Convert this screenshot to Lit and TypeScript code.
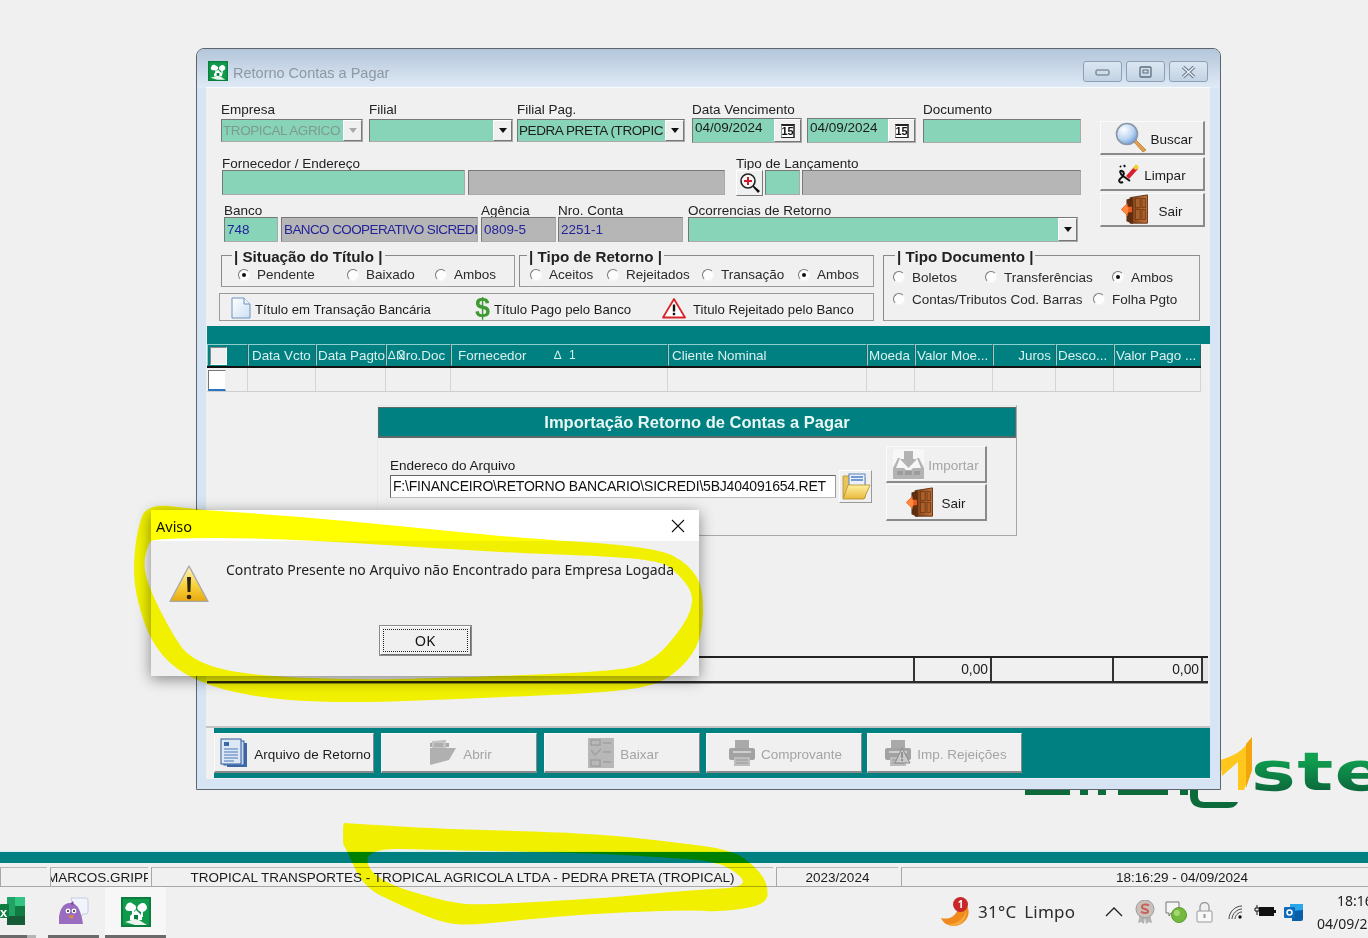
import { LitElement, html, css, svg } from "lit";
import { customElement } from "lit/decorators.js";

const appIcon = (s: number) => html`<svg width=${s} height=${s} viewBox="0 0 30 30">
  <rect width="30" height="30" fill="#0b7d3e"/>
  <rect x="2" y="2" width="26" height="26" fill="#0f9a4c"/>
  <path d="M5 9a4 4 0 0 1 7-2 4 4 0 0 1 3 5l-2 2v5h-2v-5L7 14a3 3 0 0 1-2-5zM19 7a4 4 0 0 1 6 1 4 4 0 0 1-1 6l-2 1v5h-2v-5l-3-2a4 4 0 0 1 2-6z" fill="#fff"/>
  <path d="M9 19l6-6 6 6v4H9z" fill="#fff"/><rect x="13" y="18" width="4" height="5" fill="#0b7d3e"/>
  <path d="M4 25l10-3 4 1 8 5H14z" fill="#e8f5ec"/>
</svg>`;

const door = (s: number) => html`<svg width=${s * 1.0} height=${s} viewBox="0 0 34 34">
  <defs><linearGradient id="dr" x1="0" x2="1"><stop offset="0" stop-color="#7a3c14"/><stop offset="1" stop-color="#c7763a"/></linearGradient></defs>
  <path d="M10 4L29 1v31H10z" fill="url(#dr)" stroke="#5a2c10" stroke-width="1"/>
  <path d="M6 6l7-2v29l-7-3z" fill="#5e2e10"/>
  <rect x="16" y="5" width="5" height="10" fill="#a85f2b" stroke="#6e3614" stroke-width=".8"/>
  <rect x="23" y="5" width="4" height="10" fill="#a85f2b" stroke="#6e3614" stroke-width=".8"/>
  <rect x="16" y="17" width="5" height="11" fill="#a85f2b" stroke="#6e3614" stroke-width=".8"/>
  <rect x="23" y="17" width="4" height="11" fill="#a85f2b" stroke="#6e3614" stroke-width=".8"/>
  <path d="M0 17l7-7v4h5v6H7v4z" fill="#f2591f"/><path d="M1 17l6-6v3h1v7H7v3z" fill="#ff8a3c"/>
</svg>`;

const magnifier = html`<svg width="32" height="32" viewBox="0 0 32 32">
  <defs><radialGradient id="mg" cx=".35" cy=".3" r=".8"><stop offset="0" stop-color="#fdfeff"/><stop offset=".55" stop-color="#bcd6f2"/><stop offset="1" stop-color="#5d92d6"/></radialGradient></defs>
  <path d="M19 20l9 10 3-2-10-10z" fill="#e0a050" stroke="#b97a2c" stroke-width=".8"/>
  <circle cx="12" cy="12" r="10.5" fill="url(#mg)" stroke="#8b98a8" stroke-width="1.6"/>
</svg>`;

const lens = html`<svg width="22" height="22" viewBox="0 0 22 22">
  <path d="M13 14l6 7 2-2-7-6z" fill="#111"/>
  <circle cx="9" cy="9" r="7" fill="#f4f7f4" stroke="#222" stroke-width="1.6"/>
  <path d="M9 5v8M5 9h8" stroke="#d3182f" stroke-width="2"/>
</svg>`;

const marker = html`<svg width="22" height="22" viewBox="0 0 22 22">
  <path d="M5 19c-4 2-5-2-2-4s4-6 1-7-2 3 1 5l7 5M2 3l1 1M6 2l1 2" stroke="#111" stroke-width="2" fill="none"/>
  <path d="M8 13L17 3l3 3-9 10z" fill="#d8232f"/><path d="M15 5l3-4 3 3-3 3z" fill="#f1d42a"/>
</svg>`;

const folder = html`<svg width="30" height="28" viewBox="0 0 30 28">
  <defs><linearGradient id="fo" x1="0" y1="0" x2="0" y2="1"><stop offset="0" stop-color="#fff1a0"/><stop offset="1" stop-color="#e9b93a"/></linearGradient></defs>
  <path d="M2 3h9l2 2h11v20H2z" fill="#e8c45a" stroke="#b58e2c" stroke-width=".8"/>
  <rect x="8" y="1" width="16" height="14" fill="#eaf1fb" stroke="#5a82bd"/>
  <path d="M10 4h12M10 7h12" stroke="#4d7fc4" stroke-width="1.4"/>
  <path d="M2 26l5-14h22l-6 14z" fill="url(#fo)" stroke="#b58e2c" stroke-width=".8"/>
</svg>`;

const tray = html`<svg width="31" height="31" viewBox="0 0 31 31">
  <rect x="0" y="0" width="31" height="31" fill="#f7f7f7"/>
  <path d="M11 2h9v8h4l-8.500 9L7 10h4z" fill="#b3b3b3"/>
  <path d="M5 9L0 19v11h31V19L26 9h-2l4 10h-8l-2 2h-5l-2-2H3L7 9z" fill="#b3b3b3"/>
  <path d="M4 22h6v4H4zM12 22h7v4h-7zM21 22h6v4h-6z" fill="#9c9c9c"/>
</svg>`;

const docs = html`<svg width="28" height="30" viewBox="0 0 28 30">
  <rect x="7" y="5" width="20" height="24" fill="#3c69a8"/>
  <rect x="4" y="3" width="20" height="24" fill="#c8d9ee" stroke="#355f9c"/>
  <rect x="1" y="1" width="20" height="25" fill="#dce8f6" stroke="#2e5a9a"/>
  <rect x="4" y="4" width="5" height="4" fill="#3c69a8"/>
  <path d="M4 11h14M4 14h14M4 17h14M4 20h14M4 23h10" stroke="#4a76b3"/>
</svg>`;

const grayFolder = html`<svg width="28" height="27" viewBox="0 0 28 27">
  <path d="M1 4l15-3 1 3h3v4H1z" fill="#a8a8a8"/>
  <path d="M3 2l14-1v8H3z" fill="#c4c4c4"/><path d="M5 5h9M5 7h9" stroke="#999"/>
  <path d="M1 9h26l-7 12L1 26z" fill="#b0b0b0"/>
</svg>`;

const grayCheck = html`<svg width="26" height="30" viewBox="0 0 26 30">
  <rect width="26" height="30" fill="#b8b8b8"/>
  <path d="M3 2h9v5H3zM3 12l4 5 6-6" fill="none" stroke="#a0a0a0" stroke-width="1.5"/>
  <path d="M15 5h8M15 14h8M15 24h8M3 22h9v6H3z" fill="none" stroke="#a0a0a0" stroke-width="1.5"/>
</svg>`;

const grayPrinter = (warn = false) => html`<svg width="26" height="28" viewBox="0 0 26 28">
  <path d="M6 1h14v8H6z" fill="#a9a9a9"/>
  <rect x="0" y="9" width="26" height="12" rx="2" fill="#a2a2a2"/>
  <rect x="4" y="12" width="18" height="2" fill="#cfcfcf"/>
  <path d="M5 18h16v9H5z" fill="#bdbdbd"/><path d="M7 21h12M7 24h12" stroke="#9a9a9a"/>
  ${warn ? svg`<path d="M17 9l8 15H10z" fill="#c9c9c9" stroke="#8a8a8a"/><path d="M17 13v6M17 20v2" stroke="#808080" stroke-width="1.5"/>` : ""}
</svg>`;

const pageIcon = html`<svg width="20" height="22" viewBox="0 0 20 22">
  <defs><linearGradient id="pg" x1="0" y1="0" x2="1" y2="1"><stop offset="0" stop-color="#fff"/><stop offset="1" stop-color="#cddff2"/></linearGradient></defs>
  <path d="M1 1h12l6 6v14H1z" fill="url(#pg)" stroke="#6b93bf"/><path d="M13 1v6h6" fill="#eef4fb" stroke="#6b93bf"/>
</svg>`;

const warnOutline = html`<svg width="24" height="22" viewBox="0 0 24 22">
  <path d="M12 2L23 20.500H1z" fill="#fff" stroke="#d9252a" stroke-width="1.800" stroke-linejoin="round"/>
  <path d="M12 7.500v7" stroke="#111" stroke-width="2.400"/><rect x="10.800" y="15.800" width="2.400" height="2.400" fill="#111"/>
</svg>`;

const warnBig = html`<svg width="40" height="37" viewBox="0 0 40 37">
  <defs><linearGradient id="wb" x1="0" y1="0" x2="0" y2="1"><stop offset="0" stop-color="#fdf3c2"/><stop offset=".55" stop-color="#f7d23c"/><stop offset="1" stop-color="#e9a80e"/></linearGradient></defs>
  <path d="M20 1L39 36.500H1z" fill="url(#wb)" stroke="#a8a8a8" stroke-width="1.400" stroke-linejoin="round"/>
  <path d="M18 12h4l-.6 15h-2.800z" fill="#2c2410"/><circle cx="20" cy="32" r="2.300" fill="#2c2410"/>
</svg>`;

const excel = html`<svg width="25" height="28" viewBox="0 0 25 28">
  <path d="M7 0h16a2 2 0 0 1 2 2v24a2 2 0 0 1-2 2H7z" fill="#21a366"/>
  <rect y="0" x="15" width="10" height="9" fill="#33c481"/><rect y="9" x="15" width="10" height="10" fill="#107c41"/>
  <rect y="19" x="7" width="18" height="9" fill="#185c37"/>
  <rect x="0" y="7" width="9" height="14" rx="1" fill="#107c41"/>
</svg>`;

const pidgin = html`<svg width="30" height="28" viewBox="0 0 30 28">
  <path d="M12 1h15a2 2 0 0 1 2 2v12a2 2 0 0 1-2 2h-3l-3 4v-4h-5z" fill="#f1f4fa" stroke="#c3cce0"/>
  <path d="M0 27c-1-7 1-21 11-21 8 0 11 8 13 21z" fill="#9a6cc0"/><path d="M11 7l3-3 1 4z" fill="#7a4ea3"/>
  <circle cx="9" cy="14" r="2.400" fill="#fff"/><circle cx="15" cy="14" r="2.400" fill="#fff"/><circle cx="9" cy="14" r="1" fill="#222"/><circle cx="15" cy="14" r="1" fill="#222"/>
  <path d="M9 19l6-1-2 4z" fill="#e88a2d"/>
</svg>`;

const weather = html`<svg width="32" height="30" viewBox="0 0 32 30">
  <path d="M1 21c8 2 14-1 17-9 2-5 9-5 10-1 3 9-5 18-14 18C8 29 3 26 1 21z" fill="#f08a1e"/>
  <path d="M8 27c9 1 17-6 18-14 2 8-5 16-12 16-2 0-4-1-6-2z" fill="#f7a93c"/>
</svg>`;

const trayIcons = [
  html`<svg width="20" height="24" viewBox="0 0 20 24"><path d="M5 14l-2 9 3-1 3 2 1-7zM15 14l2 9-3-1-3 2-1-7z" fill="#b4b4b4"/><circle cx="10" cy="9" r="9" fill="#c9c0ba" stroke="#9d9d9d"/><path d="M14 5.500c-3-2-8-1-7 2 1 2 6 1 6 4 0 2-5 2-7 0" fill="none" stroke="#c9605a" stroke-width="2"/></svg>`,
  html`<svg width="22" height="23" viewBox="0 0 22 23"><path d="M1 1h13v11H6l-2 3v-3H1z" fill="#f5f5f5" stroke="#777"/><circle cx="14" cy="14" r="7.500" fill="#73b93f" stroke="#5a9a2c"/><circle cx="12" cy="12" r="3" fill="#a5d873"/></svg>`,
  html`<svg width="17" height="21" viewBox="0 0 17 21"><path d="M4 9V5a4.500 4.500 0 0 1 9 0v4" fill="none" stroke="#999" stroke-width="1.300"/><rect x="1" y="9" width="15" height="11" rx="1" fill="#f8f8f8" stroke="#999"/><path d="M8.500 12v4" stroke="#999" stroke-width="2"/></svg>`,
  html`<svg width="16" height="15" viewBox="0 0 16 15"><path d="M1 14C1 7 7 1 14 1M4 14c0-5 5-10 10-10M7 14c0-3 3-7 7-7" fill="none" stroke="#444" stroke-width="1"/><circle cx="12" cy="12" r="1.700" fill="#111"/></svg>`,
  html`<svg width="22" height="15" viewBox="0 0 22 15"><path d="M3 0v3M1 3h4v3H1zM3 6v4" stroke="#111" fill="none"/><rect x="5" y="2" width="15" height="9" fill="#111"/><rect x="20" y="5" width="2" height="3" fill="#111"/></svg>`,
  html`<svg width="19" height="17" viewBox="0 0 19 17"><rect x="6" y="0" width="13" height="13" fill="#28a8ea"/><path d="M8 7l11-1v9a2 2 0 0 1-2 2H8z" fill="#0a5da8"/><rect x="0" y="3" width="11" height="11" rx="1" fill="#0f6cbd"/><circle cx="5.500" cy="8.500" r="2.500" fill="none" stroke="#fff" stroke-width="1.500"/></svg>`,
];

const rad = (label: string, w: number, on = false) =>
  html`<span class="rad" style="--w:${w}px"><i class=${on ? "dot on" : "dot"}></i>${label}</span>`;

const combo = html`<b class="arrow"></b>`;
const cal = html`<b class="cal"><u>15</u></b>`;

type Fld = { l?: string; w: number; m: number; t?: string; c?: string; x?: unknown };
const fld = (f: Fld) => html`<div class="f" style="--w:${f.w}px;--m:${f.m}px">
  <label>${f.l ?? ""}</label>
  <div class="box ${f.c ?? "g"}"><span>${f.t ?? ""}</span>${f.x ?? ""}</div>
</div>`;

const row1: Fld[] = [
  { l: "Empresa", w: 142, m: 0, t: "TROPICAL AGRICO", c: "g off up", x: html`<b class="arrow dis"></b>` },
  { l: "Filial", w: 144, m: 6, x: combo },
  { l: "Filial Pag.", w: 168, m: 4, t: "PEDRA PRETA (TROPIC", c: "g up", x: combo },
  { l: "Data Vencimento", w: 110, m: 7, t: "04/09/2024", c: "g date", x: cal },
  { w: 109, m: 5, t: "04/09/2024", c: "g date", x: cal },
  { l: "Documento", w: 158, m: 7, c: "g tall" },
];
const row3: Fld[] = [
  { l: "Banco", w: 54, m: 3, t: "748", c: "g blue" },
  { w: 197, m: 3, t: "BANCO COOPERATIVO SICREDI", c: "k blue up2" },
  { l: "Agência", w: 75, m: 3, t: "0809-5", c: "k blue" },
  { l: "Nro. Conta", w: 125, m: 2, t: "2251-1", c: "k blue" },
  { l: "Ocorrencias de Retorno", w: 390, m: 5, x: combo },
];

const cols = ["", "Data Vcto", "Data Pagto", "Nro.Doc", "Fornecedor", "Cliente Nominal", "Moeda", "Valor Moe...", "Juros", "Desco...", "Valor Pago ..."];

/* Closed, smooth outline through the given points (midpoint quadratic curves). */
const smooth = (p: number[][]) => {
  const mid = (a: number[], b: number[]) => `${(a[0] + b[0]) / 2} ${(a[1] + b[1]) / 2}`;
  let d = `M${mid(p[p.length - 1], p[0])}`;
  p.forEach((pt, i) => { d += `Q${pt[0]} ${pt[1]} ${mid(pt, p[(i + 1) % p.length])}`; });
  return d + "Z";
};
const hl1 = smooth([[147,503],[200,510],[281,515],[400,526],[507,537],[657,547],[690,565],[704,590],[702,640],[682,668],[655,686],[600,693],[480,698],[356,703],[280,700],[220,690],[175,670],[150,640],[137,600],[133,570],[137,530]])
  + smooth([[153,538],[281,538],[507,553],[657,558],[680,575],[695,597],[685,625],[650,665],[600,672],[450,678],[350,680],[243,675],[190,660],[170,630],[150,590],[143,565],[148,545]]);
const hl2 = smooth([[343,823],[345,823],[440,829],[590,833],[673,842],[733,850],[757,868],[768,885],[767,905],[720,912],[690,910],[607,913],[540,918],[483,924],[447,925],[400,905],[363,887],[345,846],[343,846]])
  + smooth([[363,848],[440,850],[590,853],[673,858],[723,862],[753,887],[690,890],[607,898],[483,905],[450,903],[373,880]]);

@customElement("app-root")
export class AppRoot extends LitElement {
  static styles = css`
    :host { display: block; }
    * { box-sizing: border-box; }
    .root { position: relative; width: 1368px; height: 938px; overflow: hidden; background: #f0f0f0; display: flex; flex-direction: column; justify-content: flex-end; font: 14px "Liberation Sans", Arial, sans-serif; color: #1c1c1c; }

    .logo { position: absolute; left: 1020px; top: 730px; width: 348px; height: 85px; }
    .logo svg { position: absolute; left: 0; top: 0; }
    .logo .ste { position: absolute; left: 231px; top: 7px; font: bold 53px/70px "DejaVu Sans", sans-serif; transform: scaleX(1.42); transform-origin: left top; letter-spacing: 1px; background: linear-gradient(#0fa050 30%, #0c6b3c 75%); -webkit-background-clip: text; background-clip: text; color: transparent; white-space: nowrap; }

    .win { position: absolute; left: 196px; top: 48px; width: 1025px; height: 742px; border: 1px solid #5d666f; border-radius: 8px 8px 0 0; background: #d6e4f3; display: flex; flex-direction: column; padding: 0 10px 10px 9px; }
    .tbar { height: 39px; margin: 0 -10px 0 -9px; padding: 12px 12px 0 11px; background: linear-gradient(#b4c6da, #dfeaf6); border-radius: 7px 7px 0 0; display: flex; align-items: flex-start; gap: 5px; color: #8c98a3; font-size: 14.500px; }
    .tbar .title { line-height: 22px; margin-top: 1px; }
    .ctl { margin-left: auto; display: flex; gap: 4px; }
    .ctl b { width: 39px; height: 21px; border: 1px solid #8ea0b4; border-radius: 3px; display: flex; align-items: center; justify-content: center; background: linear-gradient(#dbe6f2, #c3d3e4); }
    .client { flex: 1; background: #f0f0f0; display: flex; flex-direction: column; border-top: 1px solid #f8fbff; margin-top: -1px; }

    .top { height: 159px; display: flex; padding-left: 15px; }
    .rows { width: 861px; padding-top: 16px; }
    .row { display: flex; }
    .row.b { margin-top: 12px; }
    .row.c { margin-top: 7px; }
    .f { width: var(--w); margin-left: var(--m); }
    .f label { display: block; height: 15px; line-height: 11px; white-space: nowrap; font-size: 13.500px; color: #222; }
    .row.b label { line-height: 18px; }
    .row.c label { line-height: 18px; }
    .box { position: relative; height: 23px; display: flex; align-items: center; border: 1px solid; border-color: #777 #aaa #aaa #777; overflow: hidden; font-size: 13.500px; padding-left: 1px; white-space: nowrap; }
    .box span { flex: 1; overflow: hidden; }
    .row.b .box { height: 25px; }
    .row.c .box { height: 25px; }
    .g { background: #88d4b8; }
    .k { background: #b6b6b6; }
    .off { color: #7d9b90; }
    .blue { color: #23239a; }
    .blue span { padding-left: 1px; }
    .up { letter-spacing: -.42px; }
    .up2 { letter-spacing: -.6px; }
    .tall { height: 24px; }
    .date { align-items: flex-start; padding-top: 1px; height: 25px; margin-top: -1px; padding-left: 2px; }
    .arrow { width: 19px; align-self: stretch; background: #f0f0f0; border: 1px solid; border-color: #fff #777 #777 #fff; display: flex; align-items: center; justify-content: center; flex: none; }
    .arrow::after { content: ""; border: 4.500px solid transparent; border-top: 5px solid #111; border-bottom: 0; }
    .arrow.dis::after { border-top-color: #aaa; }
    .cal { width: 27px; align-self: stretch; margin-top: -1px; background: #f0f0f0; border: 1px solid; border-color: #fff #777 #777 #fff; display: flex; align-items: center; justify-content: center; flex: none; font: bold 11px/11px "Liberation Sans", sans-serif; }
    .cal u { display: block; width: 14px; height: 14px; border-top: 2px solid #222; border-right: 2px solid #555; border-bottom: 1px solid #222; border-left: 1px solid #999; background: #fff; text-align: center; text-decoration: none; color: #111; }
    .row.b .look { background: #f0f0f0; border-color: #fff #777 #777 #fff; justify-content: center; padding: 0; height: 26px; margin-bottom: -1px; }
    .look span { display: none; }

    .side { width: 105px; margin-left: 18px; padding-top: 33px; display: flex; flex-direction: column; gap: 2px; }
    .btn { background: #f0f0f0; border: solid; border-width: 1px 2px 2px 1px; border-color: #fbfbfb #8a8a8a #8a8a8a #fbfbfb; display: flex; align-items: center; justify-content: center; white-space: nowrap; font-size: 13.500px; }
    .side .btn { height: 34px; gap: 6px; }
    .side .btn span { padding-top: 3px; }
    .side .btn.bs { gap: 3px; padding-left: 4px; }
    .side .btn.lp { gap: 4px; }

    .lower { display: flex; height: 74px; padding-left: 15px; }
    .lc { width: 653px; display: flex; flex-direction: column; gap: 6px; }
    .fsr { display: flex; gap: 4px; }
    fieldset { margin: 0; padding: 0; border: 1px solid; border-color: #8a8a8a #9a9a9a #9a9a9a #8a8a8a; min-width: 0; }
    .fs1 { width: 294px; height: 40px; }
    .fs2 { width: 355px; height: 40px; }
    .fs3 { width: 317px; height: 74px; margin-left: 9px; padding-top: 3px; }
    legend { font: bold 15.200px/16px "Liberation Sans", sans-serif; color: #222; padding: 0 2px; margin-left: 10px; white-space: nowrap; }
    legend span { display: block; transform: translateY(2px); }
    .fs2 legend { margin-left: 7px; }
    .fs3 legend { margin-left: 11px; }
    .rr { display: flex; height: 22px; align-items: center; }
    .fs1 .rr, .fs2 .rr { margin-top: 3px; height: 17px; }
    .fs1 .rr { margin-left: 16px; }
    .fs2 .rr { margin-left: 10px; }
    .fs3 .rr { margin-left: 9px; }
    .rad { width: var(--w); display: flex; align-items: center; gap: 7px; white-space: nowrap; font-size: 13.500px; color: #2a2a2a; flex: none; }
    .dot { width: 12px; height: 12px; border-radius: 50%; border: 1px solid; border-color: #777 #f6f6f6 #f6f6f6 #777; background: #fdfdfd; display: flex; align-items: center; justify-content: center; flex: none; }
    .dot.on::after { content: ""; width: 4px; height: 4px; border-radius: 50%; background: #111; }
    .lgd { margin-left: -2px; width: 655px; height: 29px; border: 1px solid; border-color: #9a9a9a; display: flex; align-items: center; padding: 4px 0 0 11px; font-size: 13.200px; }
    .lgi { width: var(--w); display: flex; align-items: center; gap: var(--g); white-space: nowrap; flex: none; }
    .lgi svg { margin-top: -3px; }
    .dollar { font: bold 27px/24px "Liberation Sans", sans-serif; color: #3f9a34; margin-top: -3px; }

    .band { height: 18px; margin-top: 5px; background: #008080; margin-left: 1px; }
    .hdr, .rw { display: grid; grid-template-columns: 41px 68px 70px 65px 217px 199px 48px 78px 63px 58px 87px; width: 994px; margin-left: 1px; }
    .hdr { height: 24px; background: #008080; border-bottom: 2px solid #111; }
    .hc { position: relative; border: 1px solid; border-color: #8ecfcf #2f5f5f #008080 #8ecfcf; color: #d9f0ee; font-size: 13.400px; line-height: 21px; padding-left: 1px; white-space: nowrap; overflow: hidden; }
    .hc.wide { padding-left: 3px; }
    .hc.r { text-align: right; padding-right: 4px; }
    .hc .s { position: absolute; top: 0; font-size: 12px; }
    .hc .ck { position: absolute; left: 2px; top: 2px; width: 17px; height: 18px; background: #efefef; border: 1px solid; border-color: #888 #fff #fff #888; }
    .rw { height: 24px; border-bottom: 1px solid #cfcfcf; }
    .rc { border-right: 1px solid #d4d4d4; position: relative; }
    .rc .ck { position: absolute; left: 1px; top: 2px; width: 18px; height: 21px; background: #fff; border: 1px solid; border-color: #777 #eee #2a74c4 #777; border-bottom-width: 2px; }

    .imp { margin: 13px 0 0 171px; width: 640px; height: 131px; border: 1px solid; border-color: #e8e8e8 #a8a8a8 #a8a8a8 #e8e8e8; }
    .ih { height: 31px; margin-top: 1px; background: #008080; border: solid #5b6b6b; border-width: 1px 1px 2px 1px; color: #e8f6f4; font: bold 16.500px/29px "Liberation Sans", sans-serif; text-align: center; }
    .ib { display: flex; padding-left: 12px; }
    .ic { width: 446px; padding-top: 19px; }
    .ic label { display: block; height: 18px; line-height: 18px; font-size: 13.500px; }
    .inp { height: 23px; background: #fff; border: 1px solid; border-color: #666 #999 #bbb #666; font-size: 14px; line-height: 20px; padding-left: 2px; letter-spacing: -.2px; white-space: nowrap; overflow: hidden; color: #111; }
    .fb { width: 33px; height: 33px; margin: 32px 0 0 3px; display: flex; align-items: center; justify-content: center; background: #f0f0f0; border: 1px solid; border-color: #fff #999 #999 #fff; }
    .ibs { margin: 8px 0 0 14px; width: 101px; display: flex; flex-direction: column; gap: 1px; }
    .ibs .btn { height: 37px; gap: 4px; }
    .ibs .btn span { padding-top: 2px; }
    .dis { color: #a4a4a4; }

    .tot { margin: 120px 0 0 1px; width: 1001px; height: 27px; display: grid; grid-template-columns: 708px 77px 122px 89px 5px; border-top: 2px solid #222; border-bottom: 2px solid #2a2a2a; box-shadow: 0 1px 0 #999; }
    .tc { border-right: 2px solid #333; text-align: right; padding-right: 2px; line-height: 23px; font-size: 13.800px; }
    .tc:last-child { border-right: 0; background: #e4e4e4; }

    .tool { margin-top: auto; height: 53px; border-top: 2px solid #c4c4c4; background: #008080; background-clip: content-box; padding-bottom: 1px; display: flex; padding-left: 8px; }
    .tb { height: 40px; margin: 5px var(--g) 0 0; width: var(--w); gap: 6px; padding-left: 3px; border-width: 1px 1px 2px 1px; border-color: #fafafa #8a8a8a #8a8a8a #fafafa; }
    .tb span { padding-top: 3px; }

    .tealbar { height: 12px; background: #008080; border-top: 1px solid #d5eef0; }
    .status { height: 24px; display: flex; padding-top: 4px; border-bottom: 1px solid #a8a8a8; gap: 3px; font-size: 13.500px; color: #1a1a1a; background: #f0f0f0; }
    .sc { flex: none; width: var(--w); border-top: 1px solid #b8b8b8; border-left: 1px solid #a8a8a8; text-align: center; line-height: 19px; white-space: nowrap; overflow: hidden; display: flex; justify-content: center; }
    .sc .ts { padding-left: 94px; }

    .tasks { height: 51px; display: flex; background: #f0f0f0; position: relative; }
    .tk { position: relative; height: 51px; width: var(--w); margin-left: var(--m); flex: none; display: flex; justify-content: center; padding-top: 10px; }
    .tk::after { content: ""; position: absolute; left: 0; right: 0; bottom: 0; height: 3px; background: #6a6a6a; }
    .tk.cur { background: #f7f7f7; }
    .xl::before { content: ""; position: absolute; left: 27px; width: 9px; bottom: 0; height: 3px; background: #b4b4b4; }
    .xl em { position: absolute; left: 0; top: 18px; font: bold 13px/16px "Liberation Sans", sans-serif; color: #fff; }
    .xl.tk { justify-content: flex-start; padding-left: 0; }
    .xl.tk::after { right: 9px; }
    .right { margin-left: auto; display: flex; align-items: center; padding-bottom: 1px; }
    .wth { position: relative; width: 32px; margin-right: 6px; height: 30px; }
    .badge { position: absolute; left: 13px; top: 0; width: 15px; height: 15px; border-radius: 50%; background: #c8282a; color: #fff; font: bold 10px/15px "Noto Sans", sans-serif; text-align: center; }
    .wt { font: 17px/28px "Noto Sans", sans-serif; color: #2b2b2b; white-space: nowrap; word-spacing: 3px; width: 127px; letter-spacing: .25px; }
    .chev { width: 18px; margin-right: 12px; }
    .ti { display: flex; align-items: center; width: var(--w); flex: none; }
    .clock { width: 51px; font: 14px/23px "Noto Sans", sans-serif; color: #222; white-space: nowrap; overflow: hidden; text-align: left; }
    .clock div:first-child { padding-left: 20px; }

    .dlg { position: absolute; left: 151px; top: 510px; width: 548px; height: 166px; background: #f0f0f0; box-shadow: 0 3px 14px rgba(0,0,0,.45); display: flex; flex-direction: column; }
    .dt { height: 31px; background: #fff; display: flex; align-items: center; justify-content: space-between; padding: 0 14px 0 5px; font: 14.500px "Noto Sans", sans-serif; color: #111; }
    .db { display: flex; padding: 24px 0 0 18px; gap: 17px; height: 84px; }
    .db p { margin: -5px 0 0; font: 14px/19px "Noto Sans", sans-serif; color: #222; white-space: nowrap; letter-spacing: -.03px; }
    .ok { align-self: center; width: 93px; height: 31px; background: #f0f0f0; border: 2px solid; border-color: #fff #6f6f6f #6f6f6f #fff; outline: 1px solid #8a8a8a; outline-offset: -1px; padding: 2px; font: 14.500px "Noto Sans", sans-serif; color: #111; }
    .ok span { display: block; height: 100%; border: 1px dotted #222; line-height: 21px; text-align: center; }
    .hl { position: absolute; left: 0; top: 0; mix-blend-mode: multiply; pointer-events: none; }
  `;

  render() {
    return html`<div class="root">
      <div class="logo">
        <svg width="240" height="85" viewBox="0 0 240 85">
          <path d="M5 59h45v6H5zM60 59h8v6h-8zM78 59h8v6h-8zM98 59h50v6H98zM160 59h8v6h-8z" fill="#0d6b3b"/>
          <path d="M170 58h8v8c0 5 3 6 8 6h32c-2 5-6 6-12 6h-22c-10 0-14-5-14-12z" fill="#0d6b3b"/>
          <path d="M200 30c12-3 24-9 32-23v33l-8 20h-6V32l-16 14z" fill="#ffc61c"/>
          <path d="M226 14l6-7v33l-6 18z" fill="#f3a50e"/>
        </svg>
        <span class="ste">ste</span>
      </div>

      <div class="win">
        <div class="tbar">
          ${appIcon(20)}
          <span class="title">Retorno Contas a Pagar</span>
          <div class="ctl">
            <b><svg width="15" height="9"><rect x="1" y="3" width="13" height="5" rx="1" fill="#cfdbe8" stroke="#5d6c7c"/></svg></b>
            <b><svg width="13" height="12"><rect x="1" y="1" width="11" height="10" rx="1" fill="none" stroke="#5d6c7c" stroke-width="1.300"/><rect x="4" y="4" width="5" height="3" fill="none" stroke="#5d6c7c"/></svg></b>
            <b><svg width="15" height="12"><path d="M2 1l11 10M13 1L2 11" stroke="#6b7a8a" stroke-width="3.600"/><path d="M2 1l11 10M13 1L2 11" stroke="#e6edf5" stroke-width="1.600"/></svg></b>
          </div>
        </div>
        <div class="client">
          <div class="top">
            <div class="rows">
              <div class="row">${row1.map(fld)}</div>
              <div class="row b">
                ${fld({ l: "Fornecedor / Endereço", w: 243, m: 1 })}
                ${fld({ w: 257, m: 3, c: "k" })}
                ${fld({ l: "Tipo de Lançamento", w: 27, m: 11, c: "look", x: lens })}
                ${fld({ w: 35, m: 2 })}
                ${fld({ w: 279, m: 2, c: "k" })}
              </div>
              <div class="row c">${row3.map(fld)}</div>
            </div>
            <div class="side">
              <div class="btn bs">${magnifier}<span>Buscar</span></div>
              <div class="btn lp">${marker}<span>Limpar</span></div>
              <div class="btn">${door(31)}<span>Sair</span></div>
            </div>
          </div>

          <div class="lower">
            <div class="lc">
              <div class="fsr">
                <fieldset class="fs1"><legend><span>| Situação do Título |</span></legend>
                  <div class="rr">${rad("Pendente", 109, true)}${rad("Baixado", 88)}${rad("Ambos", 60)}</div>
                </fieldset>
                <fieldset class="fs2"><legend><span>| Tipo de Retorno |</span></legend>
                  <div class="rr">${rad("Aceitos", 77)}${rad("Rejeitados", 95)}${rad("Transação", 96)}${rad("Ambos", 60, true)}</div>
                </fieldset>
              </div>
              <div class="lgd">
                <span class="lgi" style="--w:244px;--g:4px">${pageIcon}Título em Transação Bancária</span>
                <span class="lgi" style="--w:187px;--g:4px"><span class="dollar">$</span>Título Pago pelo Banco</span>
                <span class="lgi" style="--w:210px;--g:7px">${warnOutline}Titulo Rejeitado pelo Banco</span>
              </div>
            </div>
            <fieldset class="fs3"><legend><span>| Tipo Documento |</span></legend>
              <div class="rr">${rad("Boletos", 92)}${rad("Transferências", 127)}${rad("Ambos", 60, true)}</div>
              <div class="rr">${rad("Contas/Tributos Cod. Barras", 200)}${rad("Folha Pgto", 90)}</div>
            </fieldset>
          </div>

          <div class="band"></div>
          <div class="hdr">
            ${cols.map((c, i) => html`<div class="hc ${c === "Juros" ? "r" : ""} ${c === "Data Vcto" || c === "Cliente Nominal" ? "wide" : ""}">
              ${i === 0 ? html`<i class="ck"></i>` : ""}
              ${c === "Nro.Doc" ? html`<span style="padding-left:8px">Nro.Doc</span><span class="s" style="left:1px">∆</span><span class="s" style="left:11px">2</span>` : c === "Fornecedor" ? html`<span style="padding-left:5px">Fornecedor</span><span class="s" style="left:102px">∆</span><span class="s" style="left:117px">1</span>` : c}
            </div>`)}
          </div>
          <div class="rw">
            ${cols.map((_, i) => html`<div class="rc">${i === 0 ? html`<i class="ck"></i>` : ""}</div>`)}
          </div>

          <div class="imp">
            <div class="ih">Importação Retorno de Contas a Pagar</div>
            <div class="ib">
              <div class="ic">
                <label>Endereco do Arquivo</label>
                <div class="inp">F:\\FINANCEIRO\\RETORNO BANCARIO\\SICREDI\\5BJ404091654.RET</div>
              </div>
              <div class="fb">${folder}</div>
              <div class="ibs">
                <div class="btn dis">${tray}<span>Importar</span></div>
                <div class="btn">${door(31)}<span>Sair</span></div>
              </div>
            </div>
          </div>

          <div class="tot">
            <div class="tc"></div><div class="tc">0,00</div><div class="tc"></div><div class="tc">0,00</div><div class="tc"></div>
          </div>

          <div class="tool">
            <div class="btn tb" style="--w:160px;--g:7px">${docs}<span>Arquivo de Retorno</span></div>
            <div class="btn tb dis" style="--w:156px;--g:7px">${grayFolder}<span>Abrir</span></div>
            <div class="btn tb dis" style="--w:156px;--g:6px">${grayCheck}<span>Baixar</span></div>
            <div class="btn tb dis" style="--w:156px;--g:5px">${grayPrinter()}<span>Comprovante</span></div>
            <div class="btn tb dis" style="--w:155px;--g:0px">${grayPrinter(true)}<span>Imp. Rejeições</span></div>
          </div>
        </div>
      </div>

      <div class="tealbar"></div>
      <div class="status">
        <div class="sc" style="--w:47px"></div>
        <div class="sc" style="--w:98px"><span>MARCOS.GRIPP</span></div>
        <div class="sc" style="--w:622px">TROPICAL TRANSPORTES - TROPICAL AGRICOLA LTDA - PEDRA PRETA (TROPICAL)</div>
        <div class="sc" style="--w:122px">2023/2024</div>
        <div class="sc" style="--w:467px"><span class="ts">18:16:29 - 04/09/2024</span></div>
      </div>
      <div class="tasks">
        <div class="tk xl" style="--w:36px;--m:0px">${excel}<em>x</em></div>
        <div class="tk" style="--w:51px;--m:12px">${pidgin}</div>
        <div class="tk cur" style="--w:61px;--m:6px">${appIcon(30)}</div>
        <div class="right">
          <div class="wth">${weather}<span class="badge">1</span></div>
          <div class="wt">31°C Limpo</div>
          <svg class="chev" width="18" height="10" viewBox="0 0 18 10"><path d="M1 9l8-8 8 8" fill="none" stroke="#222" stroke-width="1.300"/></svg>
          <span class="ti" style="--w:30px">${trayIcons[0]}</span>
          <span class="ti" style="--w:31px">${trayIcons[1]}</span>
          <span class="ti" style="--w:32px">${trayIcons[2]}</span>
          <span class="ti" style="--w:26px">${trayIcons[3]}</span>
          <span class="ti" style="--w:30px">${trayIcons[4]}</span>
          <span class="ti" style="--w:33px">${trayIcons[5]}</span>
          <div class="clock"><div>18:16:29</div><div>04/09/2024</div></div>
        </div>
      </div>

      <div class="dlg">
        <div class="dt"><span>Aviso</span>
          <svg width="14" height="14"><path d="M1 1l12 12M13 1L1 13" stroke="#111" stroke-width="1.100"/></svg>
        </div>
        <div class="db">${warnBig}<p>Contrato Presente no Arquivo não Encontrado para Empresa Logada</p></div>
        <div class="ok"><span>OK</span></div>
      </div>

      <svg class="hl" width="1368" height="938" viewBox="0 0 1368 938">
        <path fill-rule="evenodd" fill="#ffff00" d=${hl1}/>
        <path fill-rule="evenodd" fill="#ffff00" d=${hl2}/>
      </svg>
    </div>`;
  }
}
